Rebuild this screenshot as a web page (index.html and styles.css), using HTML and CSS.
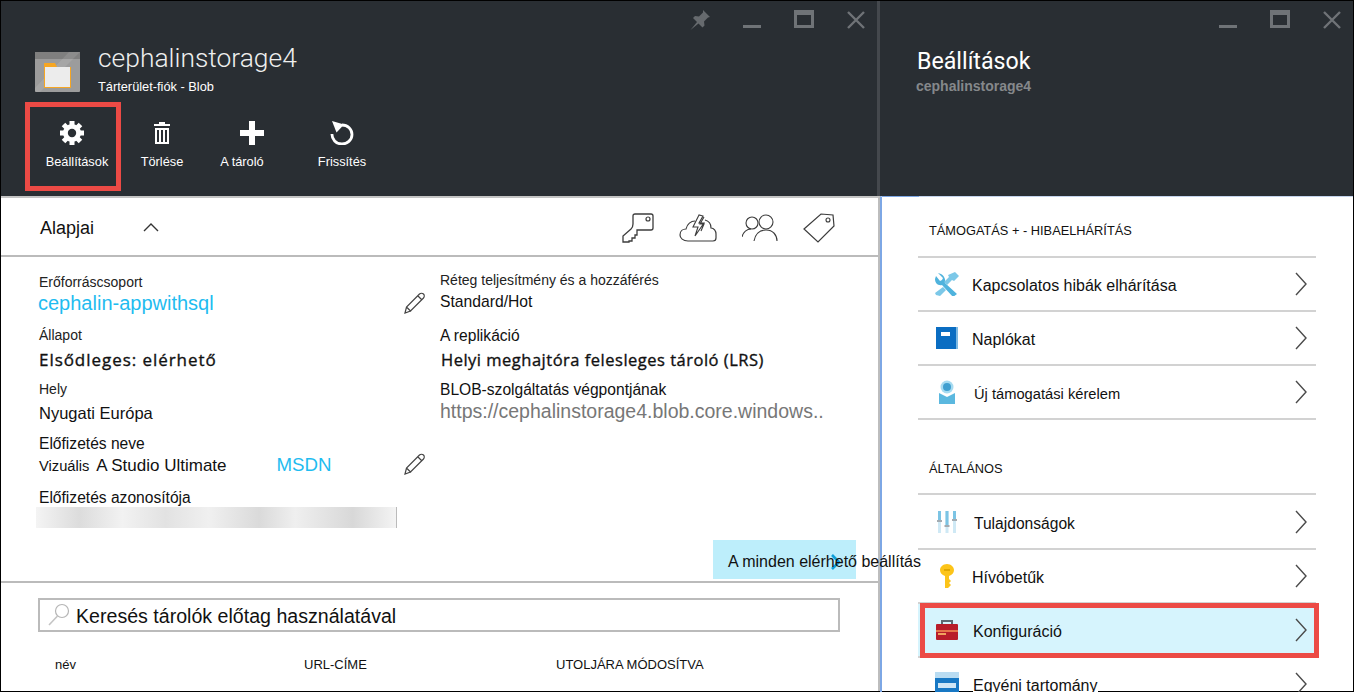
FILE: index.html
```html
<!DOCTYPE html>
<html lang="en">
<head>
  <meta charset="UTF-8" />
  <title>cephalinstorage4</title>
  <link rel="stylesheet" href="styles.css">
</head>
<body>
  <div class="screen">

    <!-- Storage account blade -->
    <section class="blade blade-main">
      <header class="blade-head">
        <div class="win-controls">
          <svg class="win-icon win-pin" viewBox="0 0 20 20"><path d="M13 0l7 7-2 .5-4 4 .5 4-2 2-4-4-8 6.500 6.500-8-4-4 2-2 4 .5 4-4z" fill="#666a6e"/></svg>
          <svg class="win-icon" viewBox="0 0 20 20"><rect x="1" y="15" width="18" height="3" fill="#6f7377"/></svg>
          <svg class="win-icon" viewBox="0 0 20 20"><path d="M0 0h20v18h-20z M3 5v10h14v-10z" fill="#6f7377" fill-rule="evenodd"/></svg>
          <svg class="win-icon" viewBox="0 0 20 20"><path d="M2 2l16 16M18 2l-16 16" stroke="#6f7377" stroke-width="2.4"/></svg>
        </div>
        <div class="title-row">
          <svg class="storage-icon" viewBox="0 0 45 40">
            <rect width="45" height="40" rx="1" fill="#9c9c9c"/>
            <rect width="45" height="7" fill="#7f7f7f"/>
            <path d="M34 0h11v0l-40 40h-5v-4z" fill="#fff" opacity=".1"/>
            <path d="M9 11h11l2 4h14v21h-27z" fill="#f6a623"/>
            <rect x="10" y="15" width="25" height="20" fill="#ececec"/>
          </svg>
          <div>
            <h1 class="main-title">cephalinstorage4</h1>
            <p class="main-sub">Tárterület-fiók - Blob</p>
          </div>
        </div>
        <div class="toolbar">
          <div class="tool tool-selected">
            <svg class="tool-icon" viewBox="0 0 24 24">
              <g stroke="#fff" stroke-width="5"><path d="M12 0v24M0 12h24M3.500 3.500l17 17M20.500 3.500l-17 17"/></g>
              <circle cx="12" cy="12" r="9" fill="#fff"/>
              <circle cx="12" cy="12" r="4.200" fill="#292e33"/>
            </svg>
            <span class="tool-label tool-label-right">Beállítások</span>
          </div>
          <div class="tool">
            <svg class="tool-icon" viewBox="0 0 24 24">
              <path d="M4 3h16v2h-16zM9 1h6v2h-6z" fill="#fff"/>
              <path d="M5 7h14v16h-14z M7 9v12h2v-12z M11 9v12h2v-12z M15 9v12h2v-12z" fill="#fff" fill-rule="evenodd"/>
            </svg>
            <span class="tool-label">Törlése</span>
          </div>
          <div class="tool">
            <svg class="tool-icon" viewBox="0 0 24 24"><path d="M9 0h6v9h9v6h-9v9h-6v-9h-9v-6h9z" fill="#fff"/></svg>
            <span class="tool-label tool-label-left">A tároló</span>
          </div>
          <div class="tool">
            <svg class="tool-icon" viewBox="0 0 24 24">
              <path d="M12 4a10 9.500 0 1 1-10 9" fill="none" stroke="#fff" stroke-width="2.800"/>
              <path d="M2 0l12 3.500-7.500 8z" fill="#fff"/>
            </svg>
            <span class="tool-label">Frissítés</span>
          </div>
        </div>
      </header>

      <div class="blade-body">
        <div class="essentials">
          <div class="essentials-left">
            <span class="essentials-title">Alapjai</span>
            <svg class="collapse-icon" viewBox="0 0 16 9"><path d="M1 8l7-7 7 7" fill="none" stroke="#333" stroke-width="1.400"/></svg>
          </div>
          <div class="essentials-icons">
            <svg class="ess-icon ess-key" viewBox="0 0 32 30"><path d="M11 3q0-2 2-2h16q2 0 2 2v12q0 2-2 2h-14v5h-2v3h-3v3h-3v1h-6v-6l8-7q2-2 2-5z" fill="none" stroke="#3c3c3c" stroke-width="1.300"/><circle cx="26" cy="6" r="2" fill="none" stroke="#3c3c3c" stroke-width="1.200"/></svg>
            <svg class="ess-icon ess-cloud" viewBox="0 0 38 28"><path d="M9 27c-5 0-8-3-8-6 0-4 3-6 6-6 1-5 5-8 9-8M26 6c4 1 6 4 6 8 3 0 5 3 5 6v4c0 2-1 3-3 3h-25" fill="none" stroke="#3c3c3c" stroke-width="1.200"/><path d="M20 1l-6 12h5l-3 9 9-13h-5l4-7zM25 3l-4 7h4l-3 7" fill="none" stroke="#3c3c3c" stroke-width="1.100"/></svg>
            <svg class="ess-icon ess-users" viewBox="0 0 36 28"><circle cx="10" cy="9" r="6" fill="none" stroke="#3c3c3c" stroke-width="1.100"/><circle cx="24" cy="8" r="7" fill="none" stroke="#3c3c3c" stroke-width="1.100"/><path d="M0 23c1-5 5-8 9-8M12 27c1-6 5-11 12-11s11 5 11 11" fill="none" stroke="#3c3c3c" stroke-width="1.100"/></svg>
            <svg class="ess-icon ess-tag" viewBox="0 0 32 30"><path d="M1 16l17-15 12 1 1 11-16 16z" fill="none" stroke="#3c3c3c" stroke-width="1.200"/><circle cx="25" cy="7" r="2" fill="none" stroke="#3c3c3c" stroke-width="1.100"/></svg>
          </div>
        </div>

        <div class="details">
          <div class="details-cols">
            <div class="col col-left">
              <div class="label">Erőforráscsoport</div>
              <div class="value-row">
                <span class="value link gap-11">cephalin-appwithsql</span>
                <svg class="pencil" viewBox="0 0 22 22"><path d="M1 21l1.500-6 13-13c1-1 3-1 4 0s1 3 0 4l-13 13zM2.500 15l4.500 4.500M14 4l4 4" fill="none" stroke="#444" stroke-width="1.200"/></svg>
              </div>
              <div class="label">Állapot</div>
              <div class="value bold status gap-4">Elsődleges: elérhető</div>
              <div class="label">Hely</div>
              <div class="value plain gap-6">Nyugati Európa</div>
              <div class="label label-big">Előfizetés neve</div>
              <div class="value-row">
                <span class="value sub gap-8"><span class="small">Vizuális</span> A Studio Ultimate</span>
                <span class="msdn">MSDN</span>
                <svg class="pencil" viewBox="0 0 22 22"><path d="M1 21l1.500-6 13-13c1-1 3-1 4 0s1 3 0 4l-13 13zM2.500 15l4.500 4.500M14 4l4 4" fill="none" stroke="#444" stroke-width="1.200"/></svg>
              </div>
              <div class="label label-big">Előfizetés azonosítója</div>
              <div class="blurred"></div>
            </div>
            <div class="col col-right">
              <div class="label">Réteg teljesítmény és a hozzáférés</div>
              <div class="value tier">Standard/Hot</div>
              <div class="label label-big">A replikáció</div>
              <div class="value bold gap-4">Helyi meghajtóra felesleges tároló (LRS)</div>
              <div class="label label-big">BLOB-szolgáltatás végpontjának</div>
              <div class="value url">https://cephalinstorage4.blob.core.windows..</div>
            </div>
          </div>
          <div class="all-settings">
            <span class="all-settings-text">A minden elérhető beállítás</span>
            <svg class="all-settings-arrow" viewBox="0 0 10 16"><path d="M1 1l7 7-7 7" fill="none" stroke="#0f9fd8" stroke-width="2.600"/></svg>
          </div>
        </div>

        <div class="containers">
          <div class="search-box">
            <svg class="search-icon" viewBox="0 0 22 24"><circle cx="14" cy="8" r="6.500" fill="none" stroke="#b5b5b5" stroke-width="1.200"/><path d="M9.500 13l-8.500 9" stroke="#c4c4c4" stroke-width="1.600"/></svg>
            <span class="search-text">Keresés tárolók előtag használatával</span>
          </div>
          <div class="table-head">
            <span>név</span>
            <span>URL-CÍME</span>
            <span>UTOLJÁRA MÓDOSÍTVA</span>
          </div>
        </div>
      </div>
    </section>

    <!-- Settings blade -->
    <section class="blade blade-settings">
      <header class="blade-head">
        <div class="win-controls">
          <svg class="win-icon" viewBox="0 0 20 20"><rect x="1" y="15" width="18" height="3" fill="#6f7377"/></svg>
          <svg class="win-icon" viewBox="0 0 20 20"><path d="M0 0h20v18h-20z M3 5v10h14v-10z" fill="#6f7377" fill-rule="evenodd"/></svg>
          <svg class="win-icon" viewBox="0 0 20 20"><path d="M2 2l16 16M18 2l-16 16" stroke="#6f7377" stroke-width="2.4"/></svg>
        </div>
        <h2 class="settings-title">Beállítások</h2>
        <p class="settings-sub">cephalinstorage4</p>
      </header>

      <div class="settings-body">
        <h3 class="group-title group-first">TÁMOGATÁS + - HIBAELHÁRÍTÁS</h3>
        <ul class="menu">
          <li class="row">
            <svg class="row-icon" viewBox="0 0 24 24">
              <path d="M3 1l5 5-1 2-2 1-4-5-1 3c0 4 3 7 7 6l11 12 4-3-12-11c1-5-2-9-7-10z" fill="#4fb3dd"/>
              <path d="M20 0l4 4-5 5-2-1-5 5-3-3 5-5-1-2zM8 15l3 3-6 6-4-1-1-2z" fill="#7cc8e8"/>
            </svg>
            <span class="row-text">Kapcsolatos hibák elhárítása</span>
            <svg class="chevron" viewBox="0 0 12 24"><path d="M1 1l10 11-10 11" fill="none" stroke="#4a4a4a" stroke-width="1.400"/></svg>
          </li>
          <li class="row">
            <svg class="row-icon" viewBox="0 0 24 24">
              <rect x="1" y="1" width="22" height="22" fill="#7db9e2"/>
              <rect x="1" y="1" width="20" height="22" fill="#0a6dc2"/>
              <rect x="6" y="6" width="9" height="4" fill="#fff"/>
            </svg>
            <span class="row-text">Naplókat</span>
            <svg class="chevron" viewBox="0 0 12 24"><path d="M1 1l10 11-10 11" fill="none" stroke="#4a4a4a" stroke-width="1.400"/></svg>
          </li>
          <li class="row">
            <svg class="row-icon" viewBox="0 0 24 24">
              <circle cx="12" cy="7" r="6.500" fill="#a6dbf1"/>
              <circle cx="12" cy="7" r="4" fill="#3f9fd0"/>
              <path d="M4 13l8 4 8-4v11h-16z" fill="#5bb8df"/>
            </svg>
            <span class="row-text row-text-in row-text-small">Új támogatási kérelem</span>
            <svg class="chevron" viewBox="0 0 12 24"><path d="M1 1l10 11-10 11" fill="none" stroke="#4a4a4a" stroke-width="1.400"/></svg>
          </li>
        </ul>

        <h3 class="group-title">ÁLTALÁNOS</h3>
        <ul class="menu menu-general">
          <li class="row">
            <svg class="row-icon" viewBox="0 0 24 24">
              <path d="M3 1h3v22h-3zM10.500 1h3v22h-3zM18 1h3v22h-3z" fill="#cfe9f5"/>
              <path d="M3 1h3v9h-3zM10.500 1h3v14h-3zM18 1h3v8h-3z" fill="#7cc4e4"/>
              <path d="M2 10h5v2h-5zM9.500 15h5v2h-5zM17 9h5v2h-5z" fill="#a3abb1"/>
            </svg>
            <span class="row-text row-text-in row-text-mid">Tulajdonságok</span>
            <svg class="chevron" viewBox="0 0 12 24"><path d="M1 1l10 11-10 11" fill="none" stroke="#4a4a4a" stroke-width="1.400"/></svg>
          </li>
          <li class="row">
            <svg class="row-icon" viewBox="0 0 24 24">
              <path d="M12 0c4 0 7 3 7 6 0 3-2 5-5 6v3l2 2-2 2 2 2-3 3h-3v-12c-3-1-5-3-5-6 0-3 3-6 7-6z" fill="#fcc419"/>
              <rect x="9" y="5" width="6" height="2" fill="#e0a800"/>
            </svg>
            <span class="row-text">Hívóbetűk</span>
            <svg class="chevron" viewBox="0 0 12 24"><path d="M1 1l10 11-10 11" fill="none" stroke="#4a4a4a" stroke-width="1.400"/></svg>
          </li>
          <li class="row row-selected">
            <svg class="row-icon" viewBox="0 0 24 24">
              <path d="M7 7v-4h10v4" fill="none" stroke="#5c6a73" stroke-width="2"/>
              <rect x="1" y="6" width="22" height="16" rx="1" fill="#b81d2a"/>
              <rect x="1" y="12" width="22" height="2" fill="#e6754a"/>
              <rect x="3" y="15" width="8" height="2" fill="#f0a35e"/>
            </svg>
            <span class="row-text row-text-one">Konfiguráció</span>
            <svg class="chevron" viewBox="0 0 12 24"><path d="M1 1l10 11-10 11" fill="none" stroke="#4a4a4a" stroke-width="1.400"/></svg>
          </li>
          <li class="row row-cut">
            <svg class="row-icon" viewBox="0 0 24 24">
              <rect width="24" height="24" fill="#1878c4"/>
              <rect width="24" height="6" fill="#b9dcf2"/>
              <rect x="3" y="11" width="18" height="5" fill="#cfe6f6"/>
            </svg>
            <span class="row-text row-text-one row-text-bg">Egyéni tartomány</span>
            <svg class="chevron" viewBox="0 0 12 24"><path d="M1 1l10 11-10 11" fill="none" stroke="#4a4a4a" stroke-width="1.400"/></svg>
          </li>
        </ul>
      </div>
    </section>

  </div>
</body>
</html>
```

FILE: styles.css
```css
* {
  box-sizing: border-box;
}
html, body {
  margin: 0;
  height: 100%;
  overflow: hidden;
}
body {
  font-family: "Liberation Sans", Arial, sans-serif;
  color: #111;
  background: #fff;
}
h1, h2, h3, p, ul {
  margin: 0;
  padding: 0;
}
ul {
  list-style: none;
}
.screen {
  display: flex;
  width: 1354px;
  height: 692px;
  border: 1px solid #000;
}
.blade {
  display: flex;
  flex-direction: column;
}
.blade-main {
  width: 879px;
  flex: none;
  position: relative;
  z-index: 1;
}
.blade-settings {
  flex: 1;
}

/* Dark header */
.blade-head {
  height: 195px;
  flex: none;
  background: #292e33;
  color: #fff;
}
.blade-main .blade-head {
  border-right: 3px solid #44484d;
}
.win-controls {
  display: flex;
  justify-content: flex-end;
  gap: 32px;
  padding: 9px 11px 0 0;
  height: 29px;
}
.win-icon {
  width: 20px;
  height: 20px;
}
.title-row {
  display: flex;
  gap: 18px;
  padding-left: 34px;
  margin-top: 13px;
}
.storage-icon {
  width: 45px;
  height: 40px;
  margin-top: 9px;
  flex: none;
}
.main-title {
  font-family: Roboto, sans-serif;
  font-weight: 300;
  font-size: 26.400px;
  line-height: 30px;
  color: #eee;
}
.main-sub {
  margin-top: 6px;
  font-size: 12.800px;
  line-height: 16px;
}
.toolbar {
  display: flex;
  margin: 7px 0 0 26px;
}
.tool {
  position: relative;
  width: 90px;
  height: 89px;
  padding-top: 19px;
  display: flex;
  flex-direction: column;
  align-items: center;
}
.tool-selected::after {
  content: "";
  position: absolute;
  top: 0;
  bottom: 0;
  left: -2px;
  right: -4px;
  border: 5px solid #ec4a45;
}
.tool-icon {
  width: 24px;
  height: 24px;
  flex: none;
}
.tool-label {
  margin-top: 9px;
  font-size: 12.800px;
  line-height: 16px;
  white-space: nowrap;
}
.tool-label-right {
  margin-left: 10px;
}
.tool-label-left {
  margin-right: 20px;
}
.settings-title {
  margin: 16px 0 0 37px;
  font-family: Roboto, sans-serif;
  font-weight: 400;
  font-size: 23.200px;
  line-height: 30px;
}
.settings-sub {
  margin: 1px 0 0 36px;
  font-size: 14px;
  font-weight: bold;
  line-height: 18px;
  color: #85888b;
}

/* Storage blade content */
.blade-body {
  flex: 1;
  border-top: 2px solid #c4c4c4;
  border-right: 2px solid #bdbdbd;
}
.essentials {
  display: flex;
  justify-content: space-between;
  align-items: center;
  height: 59px;
  padding: 2px 43px 0 39px;
  border-bottom: 2px solid #bbb;
}
.essentials-left {
  display: flex;
  align-items: center;
  gap: 49px;
}
.essentials-title {
  font-size: 18px;
  padding-top: 1px;
}
.collapse-icon {
  width: 16px;
  height: 9px;
}
.essentials-icons {
  display: flex;
  align-items: center;
  gap: 25px;
}
.ess-icon {
  height: 30px;
  flex: none;
}
.ess-key { width: 32px; }
.ess-cloud { width: 38px; }
.ess-users { width: 36px; }
.ess-tag { width: 32px; }
.details {
  display: flex;
  flex-direction: column;
  height: 326px;
  border-bottom: 2px solid #bbb;
}
.details-cols {
  display: flex;
}
.col-left {
  width: 401px;
  padding: 15px 0 0 38px;
}
.col-right {
  padding: 13px 0 0 38px;
  flex: 1;
}
.label {
  font-size: 14px;
  line-height: 20px;
  color: #222;
}
.label-big {
  font-size: 15.600px;
  color: #111;
  padding-top: 1px;
  margin-bottom: -1px;
}
.value-row {
  display: flex;
  align-items: flex-start;
  width: 387px;
  position: relative;
}
.value {
  display: block;
  white-space: nowrap;
}
.link {
  font-size: 20px;
  line-height: 22px;
  color: #1fbcf0;
  margin-left: -1px;
}
.bold {
  font-family: "Open Sans", sans-serif;
  font-size: 16.500px;
  line-height: 30px;
  letter-spacing: 0.5px;
  margin-left: 1px;
  -webkit-text-stroke: 0.35px #111;
}
.status {
  font-size: 17px;
  letter-spacing: 0.95px;
  margin-left: 0;
}
.plain {
  font-size: 16.500px;
  line-height: 28px;
}
.sub {
  font-size: 17px;
  line-height: 26px;
}
.small {
  font-size: 14.700px;
  margin-right: 3px;
}
.tier {
  font-size: 15.700px;
  line-height: 24px;
  margin-bottom: 11px;
}
.url {
  font-size: 19.500px;
  line-height: 24px;
  color: #777;
}
.gap-4 { margin-bottom: 4px; }
.gap-6 { margin-bottom: 6px; }
.gap-8 { margin-bottom: 8px; }
.gap-11 { margin-bottom: 11px; }
.msdn {
  margin-left: 50px;
  font-size: 18.700px;
  line-height: 24px;
  color: #1fbcf0;
}
.pencil {
  width: 22px;
  height: 22px;
  margin-left: auto;
  flex: none;
}
.blurred {
  width: 361px;
  height: 21px;
  margin-left: -3px;
  border-right: 1px solid #bbb;
  background: linear-gradient(90deg, #f4f4f4 0, #dcdcdc 12%, #f2f2f2 24%, #e2e2e2 36%, #f0f0f0 48%, #dadada 62%, #efefef 72%, #d8d8d8 88%, #f4f4f4 100%);
}
.all-settings {
  display: flex;
  align-items: center;
  position: relative;
  width: 143px;
  height: 39px;
  margin: auto 0 2px 712px;
  padding: 5px 0 0 15px;
  background: #bdeefb;
}
.all-settings-text {
  position: relative;
  z-index: 1;
  font-size: 16px;
  white-space: nowrap;
}
.all-settings-arrow {
  position: absolute;
  right: 15px;
  top: 14px;
  width: 10px;
  height: 16px;
}
.containers {
  padding-top: 15px;
}
.search-box {
  display: flex;
  align-items: center;
  gap: 6px;
  width: 802px;
  height: 34px;
  margin-left: 37px;
  padding: 0 0 0 8px;
  border: 2px solid #bbb;
}
.search-icon {
  width: 22px;
  height: 24px;
  flex: none;
}
.search-text {
  font-size: 19.600px;
  padding-top: 3px;
}
.table-head {
  display: grid;
  grid-template-columns: 249px 252px 1fr;
  margin-top: 25px;
  padding-left: 54px;
  font-size: 13px;
  line-height: 16px;
}

/* Settings blade content */
.settings-body {
  position: relative;
  flex: 1;
  border-top: 1px solid #c3d3ec;
  border-left: 2px solid #7da7e5;
}
.settings-body::before {
  content: "";
  position: absolute;
  top: -1px;
  left: 0;
  width: 37px;
  height: 1px;
  background: #7da7e5;
}
.group-title {
  padding: 41px 0 16px 47px;
  font-size: 12.800px;
  font-weight: normal;
  line-height: 16px;
}
.group-first {
  padding: 26px 0 17px 47px;
}
.menu {
  width: 398px;
  margin-left: 36px;
  border-top: 2px solid #d2d2d2;
}
.menu-general {
  padding-top: 1px;
}
.row {
  display: flex;
  align-items: center;
  position: relative;
  height: 54px;
  padding: 0 9px 0 17px;
  border-bottom: 2px solid #d2d2d2;
}
.row-selected {
  background: #d6f4fd;
}
.row-selected::after {
  content: "";
  position: absolute;
  top: -1px;
  bottom: -2px;
  left: 2px;
  right: -3px;
  border: 5px solid #ec4a45;
}
.row-icon {
  width: 24px;
  height: 24px;
  flex: none;
}
.row-text {
  margin: 4px 0 0 13px;
  font-size: 16px;
  line-height: 18px;
  white-space: nowrap;
}
.row-text-in {
  margin-left: 15px;
}
.row-text-one {
  margin-left: 14px;
}
.row-text-small {
  font-size: 14.700px;
}
.row-text-mid {
  font-size: 15.600px;
}
.row-text-bg {
  position: relative;
  background: #fff;
}
.chevron {
  width: 12px;
  height: 24px;
  margin-left: auto;
  flex: none;
}
```
